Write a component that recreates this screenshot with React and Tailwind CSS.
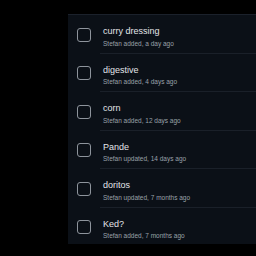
const items = [
  { title: "curry dressing", sub: "Stefan added, a day ago" },
  { title: "digestive", sub: "Stefan added, 4 days ago" },
  { title: "corn", sub: "Stefan added, 12 days ago" },
  { title: "Pande", sub: "Stefan updated, 14 days ago" },
  { title: "doritos", sub: "Stefan updated, 7 months ago" },
  { title: "Ked?", sub: "Stefan added, 7 months ago" },
]

const App = () => {
  return (
    <div className="w-[256px] h-[256px] bg-black overflow-hidden pt-[14px] pl-[68px]" style={{ fontFamily: "'Liberation Sans', Arial, sans-serif" }}>
      <div className="h-[230px] bg-[#0b1017] border-t border-[#1b212b]">
        {items.map((item, i) => (
          <div key={i} className="flex h-[38.5px]">
            <div className="w-[32px] flex items-center justify-center">
              <div className="w-[14px] h-[14px] rounded-[3px] border-[1.5px] border-[#8e949c] -ml-[1px] mt-[1px]"></div>
            </div>
            <div className={`flex-1 flex flex-col pt-[10px] pl-[3px] ${i < items.length - 1 ? "border-b border-[#1a2029]" : ""}`}>
              <div className="text-[9px] leading-[12px] text-[#e2e5e9] font-medium">{item.title}</div>
              <div className="text-[6.5px] leading-[9px] text-[#9aa1a9] mt-[1.5px]">{item.sub}</div>
            </div>
          </div>
        ))}
      </div>
    </div>
  )
}

export default App
